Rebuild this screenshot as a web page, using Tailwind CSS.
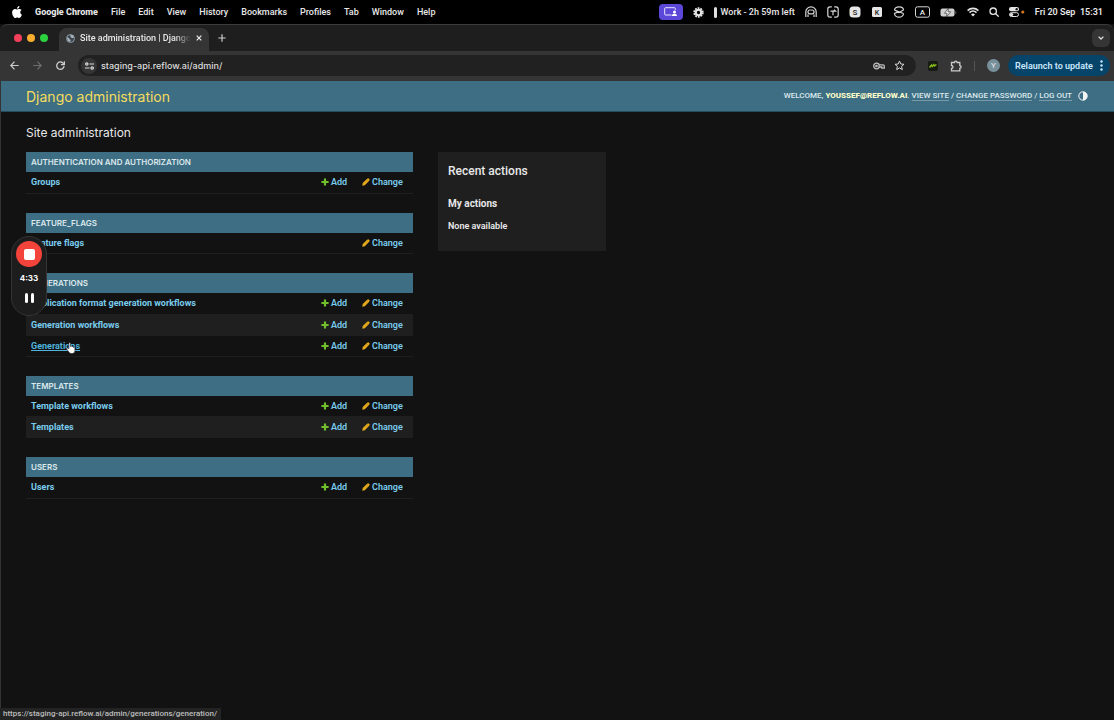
<!doctype html>
<html lang="en">
<head>
  <meta charset="UTF-8">
  <meta name="viewport" content="width=device-width, initial-scale=1.0">
  <title>Site administration | Django site admin</title>
  <script src="https://cdn.jsdelivr.net/npm/@tailwindcss/browser@4"></script>
</head>

<body class="flex flex-col min-h-screen bg-[#121212] text-[9px] leading-3 text-[#e8e8e8] font-['Roboto','Inter',sans-serif]">

  <!-- Shared icons -->
  <svg class="hidden">
    <symbol id="plus" viewBox="0 0 8 8"><path d="M2.900.400h2.200v2.500h2.500v2.200H5.100v2.500H2.900V5.100H.400V2.900h2.500z" fill="#70bf2b"/></symbol>
    <symbol id="pencil" viewBox="0 0 9 9"><path d="M.3 8.700l.5-3L5.800.900l1.400-.6 1.500 1.500-.6 1.400-4.900 5z" fill="#e3a91c"/><path d="M5.200 1.800l2 2" stroke="#a97b13" stroke-width=".5"/></symbol>
  </svg>

  <!-- Menu bar -->
  <div class="flex items-center justify-between h-6 pl-3 pr-[11px] bg-black font-medium whitespace-nowrap">
    <nav class="flex items-center gap-[13px]">
      <svg class="w-[10px] h-3" viewBox="2 0 20 24" fill="#fff"><path d="M12.152 6.896c-.948 0-2.415-1.078-3.96-1.040-2.040.027-3.910 1.183-4.961 3.014-2.117 3.675-.546 9.103 1.519 12.090 1.013 1.454 2.208 3.090 3.792 3.039 1.520-.065 2.090-.987 3.935-.987 1.831 0 2.350.987 3.960.948 1.637-.026 2.676-1.480 3.676-2.948 1.156-1.688 1.636-3.325 1.662-3.415-.039-.013-3.182-1.221-3.220-4.857-.026-3.040 2.480-4.494 2.597-4.559-1.429-2.090-3.623-2.324-4.390-2.376-2-.156-3.675 1.090-4.610 1.090zM15.530 3.830c.843-1.012 1.400-2.427 1.245-3.830-1.207.052-2.662.805-3.532 1.818-.780.896-1.454 2.338-1.273 3.714 1.338.104 2.715-.688 3.559-1.701"/></svg>
      <span class="font-extrabold">Google Chrome</span>
      <span>File</span>
      <span>Edit</span>
      <span>View</span>
      <span>History</span>
      <span>Bookmarks</span>
      <span>Profiles</span>
      <span>Tab</span>
      <span>Window</span>
      <span>Help</span>
    </nav>
    <div class="flex items-center gap-[10px]">
      <span class="flex items-center justify-center w-6 h-4 rounded-sm bg-[#5b48d9]">
        <svg class="w-[13px] h-[10px]" viewBox="0 0 13 10"><path d="M7.500 8H1.500a.8.800 0 0 1-.8-.8V1.500A.8.800 0 0 1 1.500.700h9a.8.800 0 0 1 .8.800V3" fill="none" stroke="#e9e6ff" stroke-width="1"/><circle cx="10.500" cy="5" r="1.500" fill="#fff"/><path d="M7.800 9c0-3 5.200-3 5.200 0z" fill="#fff"/></svg>
      </span>
      <svg class="w-[11px] h-[11px]" viewBox="0 0 12 12"><circle cx="6" cy="6" r="4.800" fill="none" stroke="#e4e4e4" stroke-width="1.800" stroke-dasharray="2 1.015"/><circle cx="6" cy="6" r="3" fill="none" stroke="#e4e4e4" stroke-width="2.400"/></svg>
      <span class="flex items-center gap-1"><span class="w-[3px] h-[11px] rounded-sm bg-[#e0e0e0]"></span>Work - 2h 59m left</span>
      <svg class="w-3 h-3" viewBox="0 0 12 12" fill="none" stroke="#d6d6d6" stroke-width="1.200"><path d="M.8 11V6a5.200 5.200 0 0 1 10.400 0v5M3 11V8.500M9 11V8.500"/><rect x="3" y="4" width="6" height="3.800" rx="1.900"/></svg>
      <svg class="w-3 h-3" viewBox="0 0 12 12" fill="none" stroke="#d6d6d6" stroke-width="1.200"><path d="M4.800.800H3A2.200 2.200 0 0 0 .8 3v6A2.200 2.200 0 0 0 3 11.200h1.800M7.200.800H9A2.200 2.200 0 0 1 11.200 3v6A2.200 2.200 0 0 1 9 11.200H7.200"/><path d="M6 9.200V5M3.500 5.200h5L7 3.800"/></svg>
      <svg class="w-3 h-3" viewBox="0 0 12 12"><rect x=".5" y=".5" width="11" height="11" rx="3.500" fill="#e6e6e6"/><text x="6" y="9" text-anchor="middle" font-size="8" fill="#222">S</text></svg>
      <svg class="w-3 h-3" viewBox="0 0 12 12"><rect x="1" y="1" width="10" height="10" rx="1.500" fill="#e6e6e6"/><text x="6" y="8.500" text-anchor="middle" font-size="7" fill="#222">K</text></svg>
      <svg class="w-3 h-3" viewBox="0 0 12 12" fill="none" stroke="#d6d6d6" stroke-width="1.200"><path d="M1.500 4C1.500 2 3.500.800 6 .8S10.500 2 10.500 4L6 6.500zM1.500 4L10.500 7.500M10.500 7.500c0 2-2 3.700-4.500 3.700S1.500 9.500 1.500 7.500L6 5.500"/></svg>
      <svg class="w-[15px] h-3" viewBox="0 0 15 12"><rect x=".5" y=".8" width="14" height="10.400" rx="2" fill="none" stroke="#d6d6d6"/><text x="7.500" y="9" text-anchor="middle" font-size="8" fill="#e8e8e8">A</text></svg>
      <svg class="w-[17px] h-[9px]" viewBox="0 0 17 9"><rect x=".5" y=".5" width="14" height="8" rx="2" fill="#cfcfcf"/><path d="M8.500 0L4.500 5.200h2.600L6.400 9l4.200-5.200H7.900z" fill="#fff" stroke="#333" stroke-width=".7"/><path d="M15.500 3v3c1-.3 1-2.700 0-3z" fill="#999"/></svg>
      <svg class="w-3 h-[10px]" viewBox="0 0 12 10" fill="none" stroke="#e4e4e4" stroke-width="1.600"><path d="M.6 3.600a7.700 7.700 0 0 1 10.800 0M2.500 5.600a5 5 0 0 1 7 0"/><path d="M6 9.500L4 7.500a3 3 0 0 1 4 0z" fill="#e4e4e4" stroke="none"/></svg>
      <svg class="w-[10px] h-[10px]" viewBox="0 0 10 10" fill="none" stroke="#e4e4e4" stroke-width="1.300"><circle cx="4.200" cy="4.200" r="3.200"/><path d="M6.600 6.600l2.700 2.700" stroke-linecap="round"/></svg>
      <svg class="w-4 h-[10px]" viewBox="0 0 16 10"><rect x="0" y="0" width="10" height="4.300" rx="2.100" fill="#e4e4e4"/><circle cx="7.700" cy="2.150" r="1.200" fill="#111"/><rect x=".5" y="5.700" width="9" height="3.800" rx="1.900" fill="none" stroke="#e4e4e4"/><circle cx="2.500" cy="7.600" r="1.700" fill="#e4e4e4"/><circle cx="13.800" cy="5" r="1.600" fill="#d5791f"/></svg>
      <span class="font-semibold">Fri 20 Sep&ensp;15:31</span>
    </div>
  </div>

  <!-- Browser tabs -->
  <div class="flex items-end h-[27px] pl-[14px] pr-1 border-t border-[#3c3c3c] rounded-t-lg bg-[#1e1e1e]">
    <div class="flex items-center gap-[5px] h-[26px] w-[45px]">
      <span class="w-2 h-2 rounded-full bg-[#f4405a]"></span>
      <span class="w-2 h-2 rounded-full bg-[#f9ad2e]"></span>
      <span class="w-2 h-2 rounded-full bg-[#2dd140]"></span>
    </div>
    <div class="flex items-center gap-[5px] h-[23px] w-[150px] px-[7px] rounded-t-lg bg-[#353535] pb-[3px]">
      <svg class="w-[9px] h-[9px] shrink-0" viewBox="0 0 10 10"><circle cx="5" cy="5" r="4.400" fill="#39424c" stroke="#9aa6b1" stroke-width="1"/><path d="M1 3.500l2.500 1 .5 1.500 1.500.5-1 2.500-2.500-1.500zM5 .8l3 1 .8 2.500-2.300.4-1.700-1.800z" fill="#aab4bd"/></svg>
      <span class="flex-1 overflow-hidden whitespace-nowrap font-medium mask-r-from-85% mask-r-to-100%">Site administration | Django site admin</span>
      <button aria-label="Close tab" class="shrink-0"><svg class="w-[6px] h-[6px]" viewBox="0 0 6 6" stroke="#eee" stroke-width="1.200"><path d="M.7.700l4.600 4.600M5.300.700L.7 5.300"/></svg></button>
    </div>
    <button aria-label="New tab" class="ml-[9px] mb-[9px]"><svg class="w-2 h-2" viewBox="0 0 8 8" stroke="#ccc" stroke-width="1.200"><path d="M4 .3v7.400M.3 4h7.400"/></svg></button>
    <button aria-label="Search tabs" class="flex items-center justify-center ml-auto mb-1 w-[18px] h-[18px] rounded-md bg-[#353535]"><svg class="w-[6px] h-1" viewBox="0 0 6 4" fill="none" stroke="#ddd" stroke-width="1.300"><path d="M.6.600L3 3 5.400.600"/></svg></button>
  </div>

  <!-- Address bar -->
  <div class="flex items-center h-[30px] pl-[10px] pr-1 pb-px bg-[#353535]">
    <div class="flex items-center gap-[14px] w-[68px]">
      <button aria-label="Back"><svg class="w-[9px] h-[9px]" viewBox="0 0 9 9" fill="none" stroke="#ccc" stroke-width="1.200"><path d="M8.700 4.500H.8M4.500.700L.8 4.500l3.700 3.800"/></svg></button>
      <button aria-label="Forward"><svg class="w-[9px] h-[9px]" viewBox="0 0 9 9" fill="none" stroke="#6e6e6e" stroke-width="1.200"><path d="M.3 4.500h7.900M4.500.700l3.700 3.800-3.700 3.800"/></svg></button>
      <button aria-label="Reload"><svg class="w-[9px] h-[9px]" viewBox="0 0 9 9" fill="none" stroke="#ccc" stroke-width="1.300"><path d="M7.700 2.900A3.700 3.700 0 1 0 8.100 5.200"/><path d="M8.400.300v3.400H5" /></svg></button>
    </div>
    <div class="flex items-center flex-1 h-[21px] px-[3px] rounded-full bg-[#212121]">
      <button aria-label="Site information" class="flex items-center justify-center w-4 h-4 rounded-full bg-[#353535]"><svg class="w-[9px] h-2" viewBox="0 0 9 8" fill="none" stroke="#ddd" stroke-width="1.200"><circle cx="1.800" cy="2" r="1.200"/><path d="M4.500 2H9M0 6h4.500"/><circle cx="7.200" cy="6" r="1.200"/></svg></button>
      <input aria-label="Address" type="text" value="staging-api.reflow.ai/admin/" class="flex-1 ml-1 h-4 bg-transparent font-['Inter',sans-serif] font-medium text-[#dcdcdc] outline-none">
      <svg class="w-3 h-2" viewBox="0 0 12 8" fill="none" stroke="#bdbdbd" stroke-width="1.300"><circle cx="3.500" cy="4" r="2.800"/><circle cx="3.500" cy="4" r=".7"/><path d="M6.300 2.900H10a1.300 1.300 0 0 1 1.300 1.300v2H8.800V5H6.300"/></svg>
      <button aria-label="Bookmark" class="ml-[9px] mr-2"><svg class="w-[11px] h-[11px]" viewBox="0 0 11 11" fill="none" stroke="#d8d8d8" stroke-width="1"><path d="M5.500 1l1.300 3 3.200.3-2.400 2.100.7 3.200-2.800-1.700-2.800 1.700.7-3.200L1 4.300 4.200 4z"/></svg></button>
    </div>
    <div class="flex items-center gap-3 ml-3">
      <svg class="w-[10px] h-[10px]" viewBox="0 0 10 10"><rect width="10" height="10" rx="2" fill="#171b12"/><path d="M1.500 6.500l2-2.500.7 1.600L5.800 3.500l.6 1.500 2-1.600" fill="none" stroke="#8bc220" stroke-width="1.300"/></svg>
      <svg class="w-3 h-3" viewBox="0 0 12 12" fill="none" stroke="#ccc" stroke-width="1.300"><path d="M1.500 2.500h3a1.300 1.300 0 0 1 2.600 0h2.700v3.200a1.300 1.300 0 0 1 0 2.600v2.600H1.500V8.500c2 0 2-3 0-3z"/></svg>
      <span class="w-px h-[10px] bg-[#555]"></span>
      <span class="flex items-center justify-center w-[13px] h-[13px] rounded-full bg-[#78909c] text-[8px]">Y</span>
      <button class="flex items-center justify-between w-[102px] h-[21px] -ml-1 px-[7px] rounded-full bg-[#064469] font-semibold text-[#cbe8ff] whitespace-nowrap">Relaunch to update
        <svg class="w-[3px] h-[11px]" viewBox="0 0 3 11" fill="#cbe8ff"><circle cx="1.500" cy="1.500" r="1.200"/><circle cx="1.500" cy="5.500" r="1.200"/><circle cx="1.500" cy="9.500" r="1.200"/></svg>
      </button>
    </div>
  </div>

  <div class="flex-1 border-l border-[#333]">
    <!-- Header -->
    <header class="flex items-center justify-between h-[31px] pl-[25px] pr-[26px] border-b border-[#264b5d] bg-[#3d6e83]">
      <a href="#" class="pt-px font-['Inter',sans-serif] text-[14px] leading-5 text-[#f5dd5d]">Django administration</a>
      <div class="flex items-center gap-[6px] text-[8px] font-medium text-[#dce8ec] whitespace-nowrap">
        <span>WELCOME, <strong class="font-extrabold text-[#ffffcc]">YOUSSEF@REFLOW.AI</strong>. <a href="#" class="border-b border-white/30">VIEW SITE</a> / <a href="#" class="border-b border-white/30">CHANGE PASSWORD</a> / <a href="#" class="border-b border-white/30">LOG OUT</a></span>
        <button aria-label="Toggle theme"><svg class="w-[10px] h-[10px]" viewBox="0 0 10 10"><circle cx="5" cy="5" r="4.200" fill="none" stroke="#f4f6f6" stroke-width="1"/><path d="M5 .8a4.200 4.200 0 0 1 0 8.400z" fill="#f4f6f6"/></svg></button>
      </div>
    </header>

    <!-- Content -->
    <main class="px-[25px] pt-[13px]">
      <h1 class="mb-[11px] font-['Inter',sans-serif] text-[12px] leading-4">Site administration</h1>
      <div class="flex items-start gap-[25px] max-w-[580px]">
        <div id="app-list" class="flex-1 flex flex-col gap-[19px]">
          <!-- App modules will be inserted here by JavaScript -->
        </div>
        <aside class="w-[168px] h-[99px] px-[10px] pt-[11px] bg-[#1f1f1f]">
          <h2 class="text-[12px] leading-4 font-medium">Recent actions</h2>
          <h3 class="mt-[19px] text-[10px] font-bold">My actions</h3>
          <p class="mt-[10px] font-semibold">None available</p>
        </aside>
      </div>
    </main>
  </div>

  <!-- Recorder -->
  <div class="fixed left-[11px] top-[236px] flex flex-col items-center w-9 h-20 pt-[4px] rounded-full border border-[#353535] bg-[#1d1d1d]">
    <button aria-label="Stop recording" class="flex items-center justify-center w-[26px] h-[26px] rounded-full bg-[#f4433a]"><span class="w-[11px] h-[11px] rounded-xs bg-white"></span></button>
    <span class="mt-[5px] font-['Inter',sans-serif] text-[8px] font-bold text-white">4:33</span>
    <button aria-label="Pause recording" class="flex gap-[3px] mt-[9px]"><span class="w-[3px] h-[10px] rounded-xs bg-white"></span><span class="w-[3px] h-[10px] rounded-xs bg-white"></span></button>
  </div>

  <!-- Pointer -->
  <svg class="fixed left-[66px] top-[342px] w-[10px] h-3" viewBox="0 0 10 12"><path d="M3 6.500V1.300c0-1.100 1.500-1.100 1.500 0V4.500c.4-.6 1.400-.4 1.500.3.500-.5 1.300-.2 1.400.5.600-.4 1.500 0 1.500.8V8.500c0 1.800-1 3-2.800 3H5.500c-1.500 0-2.200-.8-3-2L.8 7.200c-.5-.8.500-1.500 1.200-.9z" fill="#fff" stroke="#222" stroke-width=".6"/></svg>

  <!-- Link preview -->
  <div class="fixed left-0 bottom-0 h-3 pl-[3px] pr-1 bg-[#232323] text-[8px] font-medium text-[#bdbdbd] whitespace-nowrap">https://staging-api.reflow.ai/admin/generations/generation/</div>

  <script>
const apps = [
  { name: 'Authentication and Authorization', models: [{ name: 'Groups', add: true }] },
  { name: 'Feature_Flags', models: [{ name: 'Feature flags', add: false }] },
  { name: 'Generations', models: [
    { name: 'Application format generation workflows', add: true },
    { name: 'Generation workflows', add: true },
    { name: 'Generations', add: true, hover: true }
  ] },
  { name: 'Templates', models: [{ name: 'Template workflows', add: true }, { name: 'Templates', add: true }] },
  { name: 'Users', models: [{ name: 'Users', add: true }] }
];

const list = document.getElementById('app-list');
apps.forEach(app => {
  const rows = app.models.map(model => `
    <tr class="h-[21px] border-b border-[#1f1f1f] even:bg-[#1f1f1f]">
      <th scope="row" class="pl-[5px] text-left font-bold"><a href="#" class="${model.hover ? 'underline text-[#4fb3dc]' : ''}">${model.name}</a></th>
      <td class="w-[41px]">${model.add ? '<a href="#" class="flex items-center gap-[2px]"><svg class="w-2 h-2"><use href="#plus"/></svg>Add</a>' : ''}</td>
      <td class="w-[51px]"><a href="#" class="flex items-center gap-[2px]"><svg class="w-2 h-2"><use href="#pencil"/></svg>Change</a></td>
    </tr>
  `).join('');
  list.insertAdjacentHTML('beforeend', `
    <table class="w-full border-collapse font-semibold text-[#7accee] whitespace-nowrap">
      <caption class="h-5 pl-[5px] py-1 bg-[#3d6e83] text-left font-['Inter',sans-serif] text-[8px] font-semibold uppercase text-[#dce8ec]"><a href="#">${app.name}</a></caption>
      <tbody>${rows}</tbody>
    </table>
  `);
});
  </script>
</body>
</html>
